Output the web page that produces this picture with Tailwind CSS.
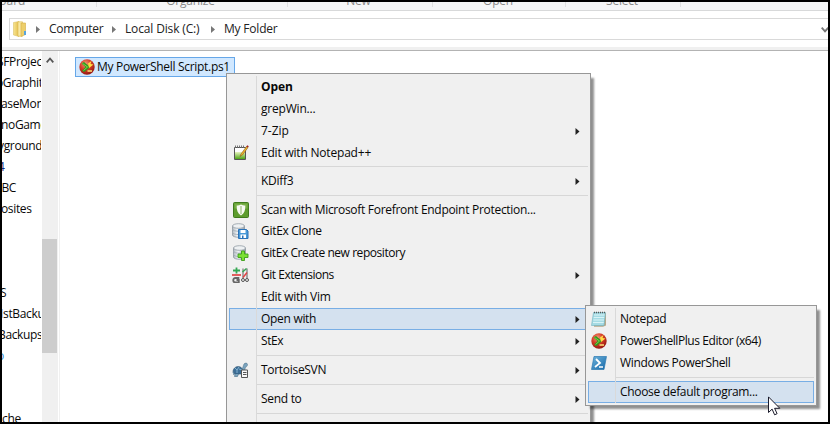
<!DOCTYPE html>
<html lang="en">
<head>
<meta charset="utf-8">
<title>My Folder</title>
<script src="https://cdn.jsdelivr.net/npm/@tailwindcss/browser@4"></script>
</head>
<body class="w-[830px] h-[424px] overflow-hidden bg-white">
<svg class="absolute w-0 h-0">
  <defs>
    <radialGradient id="rg" cx=".4" cy=".3" r=".75"><stop offset="0" stop-color="#f0a080"/><stop offset=".45" stop-color="#d8402a"/><stop offset="1" stop-color="#8e1410"/></radialGradient>
    <linearGradient id="gg" x2="0" y2="1"><stop offset="0" stop-color="#e8f4c0"/><stop offset="1" stop-color="#4fa516"/></linearGradient>
    <linearGradient id="bg" x2="1" y2="1"><stop offset="0" stop-color="#6fb4dc"/><stop offset="1" stop-color="#1467a8"/></linearGradient>
    <linearGradient id="cy"><stop offset="0" stop-color="#b4bcc4"/><stop offset=".4" stop-color="#f0f3f5"/><stop offset="1" stop-color="#96a0aa"/></linearGradient>
    <linearGradient id="fo"><stop offset="0" stop-color="#f7e48f"/><stop offset="1" stop-color="#e3bd4c"/></linearGradient>
    <symbol id="psplus" viewBox="0 0 16 16">
      <circle cx="8" cy="8" r="7.7" fill="url(#rg)"/>
      <path d="M2.500 4.500 5 3l6 5-5.500 5L3 12l3.500-4z" fill="#2f9a1c"/>
      <path d="M3.500 4.500 8.500 8l-4 3.500" fill="none" stroke="#7fd04a"/>
      <path d="M9 4.500 12.500 2l-1 3 3 .5-4.500 3.500z" fill="#ffdf45"/>
      <path d="M8.500 12h4.500" stroke="#ffe37a" stroke-width="1.500"/>
    </symbol>
    <symbol id="db" viewBox="0 0 16 16">
      <path d="M.5 3v9c0 3 12 3 12 0V3z" fill="url(#cy)" stroke="#8b959e" stroke-width=".8"/>
      <ellipse cx="6.500" cy="3" rx="6" ry="2.300" fill="#eef1f3" stroke="#929ca5" stroke-width=".8"/>
      <path d="M.5 6c0 3 12 3 12 0M.5 9.300c0 3 12 3 12 0" fill="none" stroke="#a4adb5" stroke-width=".9"/>
    </symbol>
  </defs>
</svg>
<div class="relative flex flex-col w-full h-full border-2 border-black bg-white overflow-hidden font-['Open_Sans','Noto_Sans',sans-serif] text-[12px] leading-[22px] text-[#080808] whitespace-nowrap">

  <!-- ribbon group captions -->
  <div class="flex h-[9px] shrink-0 bg-[#f5f6f7] border-b border-[#d8d9da] text-[#8a8a8a] leading-4 overflow-hidden">
    <div class="w-[95px] h-[5px] border-r border-[#e0e1e2]"><div class="-mt-[9px] -ml-[31px]">Clipboard</div></div>
    <div class="w-[191px] h-[5px] border-r border-[#e0e1e2] text-center"><div class="-mt-[9px] -ml-[3px] tracking-[-0.2px]">Organize</div></div>
    <div class="w-[145px] h-[5px] border-r border-[#e0e1e2] text-center"><div class="-mt-[9px] -ml-[3px] tracking-[-0.2px]">New</div></div>
    <div class="w-[133px] h-[5px] border-r border-[#e0e1e2] text-center"><div class="-mt-[9px] -ml-[2px] tracking-[-0.2px]">Open</div></div>
    <div class="w-[115px] h-[5px] border-r border-[#e0e1e2] text-center"><div class="-mt-[9px] -ml-[2px] tracking-[-0.2px]">Select</div></div>
  </div>

  <!-- address bar -->
  <div class="h-[40px] shrink-0 pt-[7px] pl-[7px] border-b border-[#b3b3b3] bg-linear-to-b from-white from-93% to-[#f0f0f0] to-93%">
    <div class="relative flex items-center h-[22px] border border-r-0 border-[#d9d9d9] bg-white text-[#222]">
      <svg class="ml-[3px] w-[14px] h-4" viewBox="0 0 14 16"><path d="M.5 1.500 6 .5v15L.5 14z" fill="url(#fo)" stroke="#dcc36a" stroke-width=".6"/><path d="M5 .8h4.500v14.400H5z" fill="#f8e9a4" stroke="#dcb94e" stroke-width=".6"/><path d="M8 2h4.500v11.500L8 15.500z" fill="#edcf6b" stroke="#d3ac43" stroke-width=".6"/><path d="M11 10h2v4h-2z" fill="#58a3dc"/></svg>
      <svg class="ml-[9px] w-1 h-[7px]" viewBox="0 0 4 7"><path d="M0 0 4 3.500 0 7z" fill="#777"/></svg>
      <span class="ml-[9px] w-[54px] tracking-[-0.25px]">Computer</span>
      <svg class="ml-[9px] w-1 h-[7px]" viewBox="0 0 4 7"><path d="M0 0 4 3.500 0 7z" fill="#777"/></svg>
      <span class="ml-[9px] w-[76px] tracking-[-0.15px]">Local Disk (C:)</span>
      <svg class="ml-[10px] w-1 h-[7px]" viewBox="0 0 4 7"><path d="M0 0 4 3.500 0 7z" fill="#777"/></svg>
      <span class="ml-[9px] tracking-[-0.2px]">My Folder</span>
      <svg class="ml-auto -mr-[1px] mt-[2px] w-2 h-[6px]" viewBox="0 0 8 6"><path d="M.7.7 4 4.300 7.300.7" fill="none" stroke="#777" stroke-width="1.900"/></svg>
    </div>
  </div>

  <div class="flex flex-1 min-h-0">
    <!-- navigation tree -->
    <div class="w-[39px] overflow-hidden leading-[21px] tracking-[-0.35px]">
      <div class="-ml-[5px]">SFProjects</div>
      <div class="-ml-[6px]">oGraphite</div>
      <div class="-ml-px">aseMonkey</div>
      <div class="-ml-px">noGame</div>
      <div class="-ml-[4px]">yground</div>
      <div class="-ml-[4px] text-[#102a80]">4</div>
      <div class="-ml-[8px]">BBC</div>
      <div class="-ml-px">osites</div>
      <div class="h-[63px]"></div>
      <div class="-ml-[2px]">S</div>
      <div class="-ml-[2px]"><span class="text-[#5a0a68]">I</span>stBackups</div>
      <div class="-ml-[4px]">Backups</div>
      <div class="-ml-[5px] text-[#2c8be0]">o</div>
      <div class="h-[42px]"></div>
      <div>che</div>
    </div>
    <!-- scrollbar -->
    <div class="ml-px w-4 bg-[#f0f0f0]">
      <svg class="mt-[6px] ml-1 w-2 h-[6px]" viewBox="0 0 8 6"><path d="M.7 5.300 4 1.500 7.300 5.300" fill="none" stroke="#555" stroke-width="1.800"/></svg>
      <div class="mt-[176px] w-[15px] h-[114px] bg-[#cdcdcd]"></div>
    </div>
    <div class="ml-px w-px bg-[#f0f0f0]"></div>
    <div class="pt-[6px] pl-[15px]">
      <div class="flex items-center w-[160px] h-[20px] border border-[#66a7e8] bg-[#d1e8ff]">
        <svg class="ml-[3px] w-4 h-4"><use href="#psplus"/></svg>
        <span class="ml-[2px] tracking-[-0.3px]">My PowerShell Script.ps1</span>
      </div>
    </div>
  </div>

  <!-- context menu -->
  <div class="absolute left-[224px] top-[71px] w-[365px] h-[360px] border border-[#979797] bg-[#f0f0f0] p-[2px] shadow-[4px_4px_2px_-1px_#00000070] tracking-[-0.3px]">
    <div class="relative">
      <div class="absolute left-[27px] top-0 w-px h-[350px] bg-[#d9d9d9]"></div>
      <div class="flex items-center h-[22px] pl-[32px] font-bold tracking-[-0.1px]">Open</div>
      <div class="flex items-center h-[22px] pl-[32px] tracking-[-0.2px]">grepWin...</div>
      <div class="flex items-center h-[22px] pl-[32px] pr-[8px] justify-between tracking-[0px]">7-Zip<svg class="w-[5px] h-[7px]" viewBox="0 0 5 7"><path d="M.5 0 4.500 3.500 .5 7z" fill="#222"/></svg></div>
      <div class="flex items-center h-[22px] pl-[4px] tracking-[-0.2px]">
        <svg class="w-4 h-4 mr-[12px]" viewBox="0 0 16 16"><path d="M1.500 2.500h11v12h-11z" fill="#fff" stroke="#555"/><path d="M2 7h10v7H2z" fill="url(#gg)"/><path d="M2 1.500h10" stroke="#777" stroke-width="2" stroke-dasharray="1 1"/><path d="m7 11.500 1-2.500 5.500-7.500 1.500 1L9.500 10z" fill="#f0b52c" stroke="#8a5a18" stroke-width=".6"/><path d="m13.300 1.600 1-1.300 1.500 1-1 1.300z" fill="#a02020"/></svg>Edit with Notepad++</div>
      <div class="ml-[28px] h-[6px] pt-[2px]"><div class="h-px bg-[#d7d7d7]"></div></div>
      <div class="flex items-center h-[22px] pl-[32px] pr-[8px] justify-between">KDiff3<svg class="w-[5px] h-[7px]" viewBox="0 0 5 7"><path d="M.5 0 4.500 3.500 .5 7z" fill="#222"/></svg></div>
      <div class="ml-[28px] h-[7px] pt-[3px]"><div class="h-px bg-[#d7d7d7]"></div></div>
      <div class="flex items-center h-[21px] pl-[4px] tracking-[-0.29px]">
        <svg class="w-4 h-4 mr-[12px]" viewBox="0 0 16 16"><rect x=".5" y=".5" width="15" height="15" rx="1" fill="#5d9c2d" stroke="#3f7a1d"/><path d="M1.500 1.500h13v5h-13z" fill="#8aba59" opacity=".6"/><path d="M8 2.500c1.300.8 2.700 1 4.300 1 .2 4.500-1 8-4.300 10-3.300-2-4.500-5.500-4.300-10 1.600 0 3-.2 4.300-1z" fill="#f7faf2"/><path d="M8 4v8" stroke="#8eb56a"/></svg>Scan with Microsoft Forefront Endpoint Protection...</div>
      <div class="flex items-center h-[22px] pl-[3px]">
        <svg class="w-[17px] h-4 mr-[12px]" viewBox="0 0 17 16"><use href="#db" width="16" height="16"/><path d="M6.500 6.500h8l1.500 1.500v7.500H6.500z" fill="#4a9ad8" stroke="#2a72b8"/><path d="M8.500 7h5v3h-5zM8.500 11.500h5.500V15H8.500z" fill="#fff"/><path d="M10 12.500h1.500V15H10z" fill="#2a72b8"/></svg>GitEx Clone</div>
      <div class="flex items-center h-[22px] pl-[4px] tracking-[-0.44px]">
        <svg class="w-4 h-4 mr-[12px]" viewBox="0 0 16 16"><use href="#db" width="16" height="16"/><path d="M8.500 6h3v3h3.500v3.500h-3.500v3h-3v-3H5V9h3.500z" fill="#7be033" stroke="#3b9e18" stroke-width=".9"/></svg>GitEx Create new repository</div>
      <div class="flex items-center h-[22px] pl-[3px] pr-[8px] tracking-[-0.48px]">
        <svg class="w-[17px] h-4 mr-[12px]" viewBox="0 0 17 16"><path d="M1 3.500h7M4.500.5v6" stroke="#35a853" stroke-width="1.800"/><path d="M0 8h9" stroke="#e04444" stroke-width="1.700"/><path d="M7.300 11H3.500c-3 0-3 4.500 0 4.500h3.300V13H4.500" fill="none" stroke="#666" stroke-width="1.800"/><path d="M11 1.500v10M15 1.500v10" stroke="#888" stroke-width="1.400"/><path d="m10.500 5 4-3.500" stroke="#35a853" stroke-width="1.500"/><path d="m11 10.500 4-5" stroke="#e04444" stroke-width="1.500"/><circle cx="11" cy="13" r="1.500" fill="#eee" stroke="#555"/><circle cx="15" cy="13" r="1.500" fill="#eee" stroke="#555"/></svg>Git Extensions<svg class="ml-auto w-[5px] h-[7px]" viewBox="0 0 5 7"><path d="M.5 0 4.500 3.500 .5 7z" fill="#222"/></svg></div>
      <div class="flex items-center h-[22px] pl-[32px] tracking-[-0.25px]">Edit with Vim</div>
      <div class="flex items-center h-[22px] pl-[31px] pr-[7px] justify-between border border-[#78aee5] bg-[#7eb4ea]/25">Open with<svg class="w-[5px] h-[7px]" viewBox="0 0 5 7"><path d="M.5 0 4.500 3.500 .5 7z" fill="#222"/></svg></div>
      <div class="flex items-center h-[22px] pl-[32px] pr-[8px] justify-between tracking-[-0.4px]">StEx<svg class="w-[5px] h-[7px]" viewBox="0 0 5 7"><path d="M.5 0 4.500 3.500 .5 7z" fill="#222"/></svg></div>
      <div class="ml-[28px] h-[7px] pt-[3px]"><div class="h-px bg-[#d7d7d7]"></div></div>
      <div class="flex items-center h-[22px] pl-[3px] pr-[8px]">
        <svg class="w-[17px] h-4 mr-[12px]" viewBox="0 0 17 16"><path d="M1 9c1-5 7-6 9.500-2l1 3-1 2H2.500z" fill="#3c6e96" stroke="#2b506e" stroke-width=".6"/><path d="m3 6 2 2 2-3M5 8v3M7 7l3 1" fill="none" stroke="#83b0cf"/><path d="M10 7c1-1 1-3 2-5 1-1.500 3.500-1 3.500.5S14.500 5 13.500 5L12.500 9z" fill="#7ba4be" stroke="#456a84" stroke-width=".5"/><path d="m.5 10 2 1-1 2M3 12l-.5 2.500h3l1-2.500" fill="#7ba4be" stroke="#456a84" stroke-width=".6"/><path d="M9.500 8h6v7.500h-6z" fill="#f8f8f8" stroke="#555"/><path d="M11 10.500h3.500M11 12.500h3.500" stroke="#555"/></svg>TortoiseSVN<svg class="ml-auto w-[5px] h-[7px]" viewBox="0 0 5 7"><path d="M.5 0 4.500 3.500 .5 7z" fill="#222"/></svg></div>
      <div class="ml-[28px] h-[7px] pt-[3px]"><div class="h-px bg-[#d7d7d7]"></div></div>
      <div class="flex items-center h-[22px] pl-[32px] pr-[8px] justify-between">Send to<svg class="w-[5px] h-[7px]" viewBox="0 0 5 7"><path d="M.5 0 4.500 3.500 .5 7z" fill="#222"/></svg></div>
      <div class="ml-[28px] h-[7px] pt-[3px]"><div class="h-px bg-[#d7d7d7]"></div></div>
    </div>
  </div>

  <!-- "Open with" submenu -->
  <div class="absolute left-[583px] top-[303px] w-[232px] h-[101px] border border-[#979797] bg-[#f0f0f0] p-[2px] shadow-[4px_4px_2px_-1px_#00000070] tracking-[-0.32px]">
    <div class="relative">
      <div class="absolute left-[27px] top-0 w-px h-[95px] bg-[#d9d9d9]"></div>
      <div class="flex items-center h-[22px] pl-[3px]">
        <svg class="w-4 h-4 mr-[13px]" viewBox="0 0 16 16"><path d="M3 2h12v12.500l-3 1.200H3z" fill="#b8a98a"/><path d="M2.500 1.500h12l-1.500 13H.5z" fill="#a5dbe4" stroke="#6fb0bd" stroke-width=".6"/><path d="M3 4h10.500M2.700 6.500h10.500M2.400 9H13M2 11.500h10.700" stroke="#d9f3f6"/><path d="M3 1.500h11" stroke="#555" stroke-width="1.600" stroke-dasharray="1 1"/></svg>Notepad</div>
      <div class="flex items-center h-[22px] pl-[3px] tracking-[-0.42px]">
        <svg class="w-4 h-4 mr-[13px]"><use href="#psplus"/></svg>PowerShellPlus Editor (x64)</div>
      <div class="flex items-center h-[22px] pl-[3px]">
        <svg class="w-4 h-4 mr-[13px]" viewBox="0 0 16 16"><path d="M3 1.500h12.500l-2.500 13H.5z" fill="url(#bg)" stroke="#2b78b0" stroke-width=".7"/><path d="m5 4 4 4-5 4" fill="none" stroke="#fff" stroke-width="1.800"/><path d="M8 12h4" stroke="#fff" stroke-width="1.500"/></svg>Windows PowerShell</div>
      <div class="ml-[28px] h-[7px] pt-[3px]"><div class="h-px bg-[#d7d7d7]"></div></div>
      <div class="flex items-center h-[22px] pl-[31px] border border-[#78aee5] bg-[#7eb4ea]/25">Choose default program...</div>
    </div>
  </div>

  <!-- mouse pointer -->
  <svg class="absolute left-[766px] top-[394px] w-[13px] h-5" viewBox="0 0 13 20"><path d="M.5.900v15.600l3.600-3.400 2.500 5.700 2.500-1.100-2.500-5.400h5.200z" fill="#fff" stroke="#1b1b2b"/></svg>
</div>
</body>
</html>
